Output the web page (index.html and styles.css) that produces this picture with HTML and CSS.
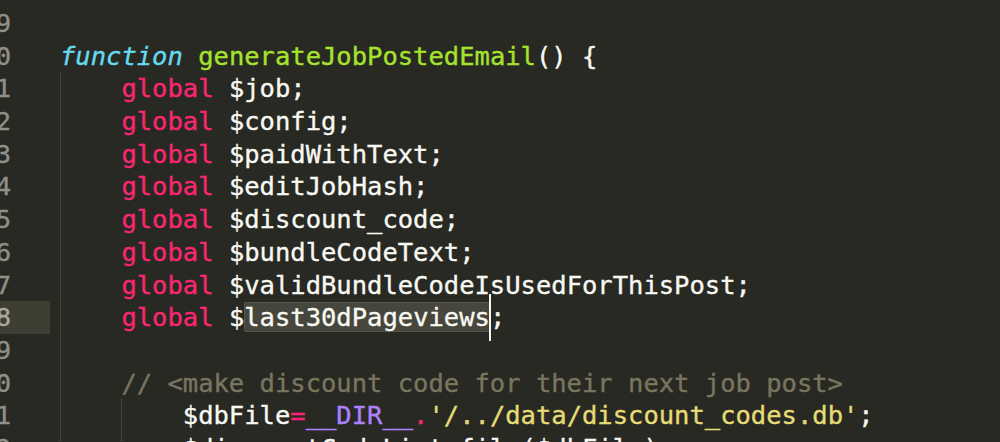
FILE: index.html
```html
<!DOCTYPE html>
<html>
<head>
    <meta charset="utf-8">
    <title>generateJobPostedEmail</title>
    <link rel="stylesheet" href="styles.css">
</head>
<body>
    <div class="editor">
        <div class="gutter">
            <div class="num">19</div>
            <div class="num">20</div>
            <div class="num">21</div>
            <div class="num">22</div>
            <div class="num">23</div>
            <div class="num">24</div>
            <div class="num">25</div>
            <div class="num">26</div>
            <div class="num">27</div>
            <div class="num current">28</div>
            <div class="num">29</div>
            <div class="num">30</div>
            <div class="num">31</div>
            <div class="num">32</div>
        </div>
        <div class="code">
            <div class="line"></div>
            <div class="line"><span class="storage">function</span> <span class="entity">generateJobPostedEmail</span>() {</div>
            <div class="block">
                <div class="line"><span class="keyword">global</span> $job;</div>
                <div class="line"><span class="keyword">global</span> $config;</div>
                <div class="line"><span class="keyword">global</span> $paidWithText;</div>
                <div class="line"><span class="keyword">global</span> $editJobHash;</div>
                <div class="line"><span class="keyword">global</span> $discount_code;</div>
                <div class="line"><span class="keyword">global</span> $bundleCodeText;</div>
                <div class="line"><span class="keyword">global</span> $validBundleCodeIsUsedForThisPost;</div>
                <div class="line"><span class="keyword">global</span> $<span class="match">last30dPageviews</span><span class="caret"></span>;</div>
                <div class="line"></div>
                <div class="line"><span class="comment">// &lt;make discount code for their next job post&gt;</span></div>
                <div class="block">
                    <div class="line">$dbFile<span class="keyword">=</span><span class="constant">__DIR__</span><span class="keyword">.</span><span class="string">'/../data/discount_codes.db'</span>;</div>
                    <div class="line">$discountCodeList<span class="keyword">=</span>file($dbFile);</div>
                </div>
            </div>
        </div>
    </div>
</body>
</html>
```

FILE: styles.css
```css
html, body {
    margin: 0;
    padding: 0;
    height: 100%;
    background-color: #282923;
    overflow: hidden;
}
.editor {
    display: flex;
    padding-top: 7px;
    font-family: "DejaVu Sans Mono", "Liberation Mono", monospace;
    font-size: 25.5px;
    line-height: 32.7px;
    color: #f8f8f2;
    -webkit-text-stroke: 0.35px currentColor;
}
.gutter {
    width: 90px;
    margin-left: -40px;
    flex-shrink: 0;
    color: #8f908a;
}
.num {
    height: 32.7px;
    padding-right: 39px;
    text-align: right;
}
.num.current {
    background-color: #3e3e33;
    color: #a8a89f;
}
.code {
    padding-left: 10px;
}
.line {
    height: 32.7px;
    white-space: pre;
}
.block {
    border-left: 1px dotted #5c5c54;
    padding-left: calc(4ch - 1px);
}
.storage {
    color: #66d9ef;
    font-style: italic;
}
.entity {
    color: #a6e22e;
}
.keyword {
    color: #f92672;
}
.comment {
    color: #79765f;
}
.string {
    color: #e6db74;
}
.constant {
    color: #ae81ff;
}
.match {
    background-color: #46463d;
    box-shadow: inset 0 0 0 1px #55554b;
    border-radius: 2px;
}
.caret {
    display: inline-block;
    position: relative;
    width: 0;
    height: 32.7px;
    vertical-align: top;
}
.caret::after {
    content: "";
    position: absolute;
    left: -1px;
    top: -7px;
    width: 2px;
    height: 47px;
    background-color: #f8f8f0;
}
```
